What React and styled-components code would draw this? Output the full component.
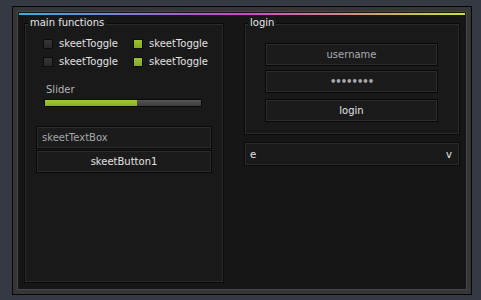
import React from "react";
import styled, { createGlobalStyle } from "styled-components";

const GlobalStyle = createGlobalStyle`
  html, body {
    margin: 0;
    padding: 0;
    background: #353944;
  }
  body {
    font-family: "DejaVu Sans", Verdana, sans-serif;
    font-size: 10px;
    color: #dcdcdc;
  }
  * {
    box-sizing: border-box;
  }
`;

const Window = styled.div`
  margin: 6px 0 0 12px;
  width: 460px;
  height: 289px;
  border: 1px solid #060606;
  background: #363636;
  padding: 4px;
`;

const Inner = styled.div`
  height: 100%;
  border: 1px solid #474747;
  background: #161616;
  padding: 1px;
  display: flex;
  flex-direction: column;
`;

const GradientBar = styled.div`
  height: 2px;
  flex: none;
  background: linear-gradient(
    90deg,
    #37b1da 0%,
    #cc46cd 50%,
    #cce335 100%
  );
`;

const Body = styled.div`
  flex: 1;
  padding: 8px 5px 5px;
  display: grid;
  grid-template-columns: 200px 216px;
  column-gap: 20px;
`;

const Column = styled.div`
  display: flex;
  flex-direction: column;
`;

const Group = styled.div`
  position: relative;
  height: ${(p) => p.$height}px;
  border: 1px solid #0a0a0a;
  box-shadow: inset 0 0 0 1px #2a2a2a;
  background: #191919;
  flex: none;
`;

const GroupTitle = styled.span`
  position: absolute;
  top: -7px;
  left: 3px;
  padding: 0 2px;
  line-height: 12px;
  background: #191919;
  color: #e6e6e6;
`;

const ToggleGrid = styled.div`
  margin: 15px 0 0 18px;
  display: grid;
  grid-template-columns: 90px 90px;
  row-gap: 8px;
`;

const Toggle = styled.div`
  display: flex;
  align-items: center;
  gap: 6px;
  height: 10px;
  line-height: 10px;
  color: #e2e2e2;
`;

const Check = styled.span`
  width: 10px;
  height: 10px;
  flex: none;
  border: 1px solid #0c0c0c;
  background: ${(p) =>
    p.$on
      ? "linear-gradient(#9cc22e, #86a826)"
      : "linear-gradient(#353535, #292929)"};
`;

const SliderBlock = styled.div`
  margin: 17px 0 0 19px;
  width: 158px;
`;

const SliderLabel = styled.div`
  padding-left: 2px;
  line-height: 12px;
  color: #b4b4b4;
`;

const SliderTrack = styled.div`
  margin-top: 3px;
  height: 8px;
  border: 1px solid #0a0a0a;
  background: linear-gradient(#575757, #3c3c3c);
`;

const SliderFill = styled.div`
  height: 100%;
  background: linear-gradient(#a2c832, #8bae28);
`;

const FieldStack = styled.div`
  margin: 19px 0 0 11px;
  width: 176px;
  display: flex;
  flex-direction: column;
  gap: 1px;
`;

const Field = styled.div`
  height: 23px;
  border: 1px solid #080808;
  box-shadow: inset 0 0 0 1px #2c2c2c;
  background: #1b1b1b;
  display: flex;
  align-items: center;
  justify-content: ${(p) => (p.$center ? "center" : "flex-start")};
  padding: 0 5px;
  color: ${(p) => p.$color || "#e2e2e2"};
  margin-top: ${(p) => p.$gap || 0}px;
`;

const LoginStack = styled.div`
  margin: 19px 0 0 20px;
  width: 173px;
  display: flex;
  flex-direction: column;
`;

const Dots = styled.span`
  font-size: 10px;
  letter-spacing: -1px;
  font-weight: bold;
`;

const Combo = styled.div`
  margin-top: 7px;
  height: 24px;
  border: 1px solid #0a0a0a;
  box-shadow: inset 0 0 0 1px #2c2c2c;
  background: #191919;
  display: flex;
  align-items: center;
  justify-content: space-between;
  padding: 0 7px 0 5px;
  color: #e6e6e6;
`;

const toggles = [
  { label: "skeetToggle", on: false },
  { label: "skeetToggle", on: true },
  { label: "skeetToggle", on: false },
  { label: "skeetToggle", on: true },
];

export default function App() {
  const slider = 0.59;
  return (
    <>
      <GlobalStyle />
      <Window>
        <Inner>
          <GradientBar />
          <Body>
            <Column>
              <Group $height={260}>
                <GroupTitle>main functions</GroupTitle>
                <ToggleGrid>
                  {toggles.map((t, i) => (
                    <Toggle key={i}>
                      <Check $on={t.on} />
                      {t.label}
                    </Toggle>
                  ))}
                </ToggleGrid>
                <SliderBlock>
                  <SliderLabel>Slider</SliderLabel>
                  <SliderTrack>
                    <SliderFill style={{ width: `${slider * 100}%` }} />
                  </SliderTrack>
                </SliderBlock>
                <FieldStack>
                  <Field $color="#a3a8ad">skeetTextBox</Field>
                  <Field $center>skeetButton1</Field>
                </FieldStack>
              </Group>
            </Column>
            <Column>
              <Group $height={112}>
                <GroupTitle>login</GroupTitle>
                <LoginStack>
                  <Field $center $color="#a9abb0">
                    username
                  </Field>
                  <Field $center $color="#a9abb0" $gap={4}>
                    <Dots>••••••••</Dots>
                  </Field>
                  <Field $center $gap={6}>
                    login
                  </Field>
                </LoginStack>
              </Group>
              <Combo>
                <span>e</span>
                <span>v</span>
              </Combo>
            </Column>
          </Body>
        </Inner>
      </Window>
    </>
  );
}
